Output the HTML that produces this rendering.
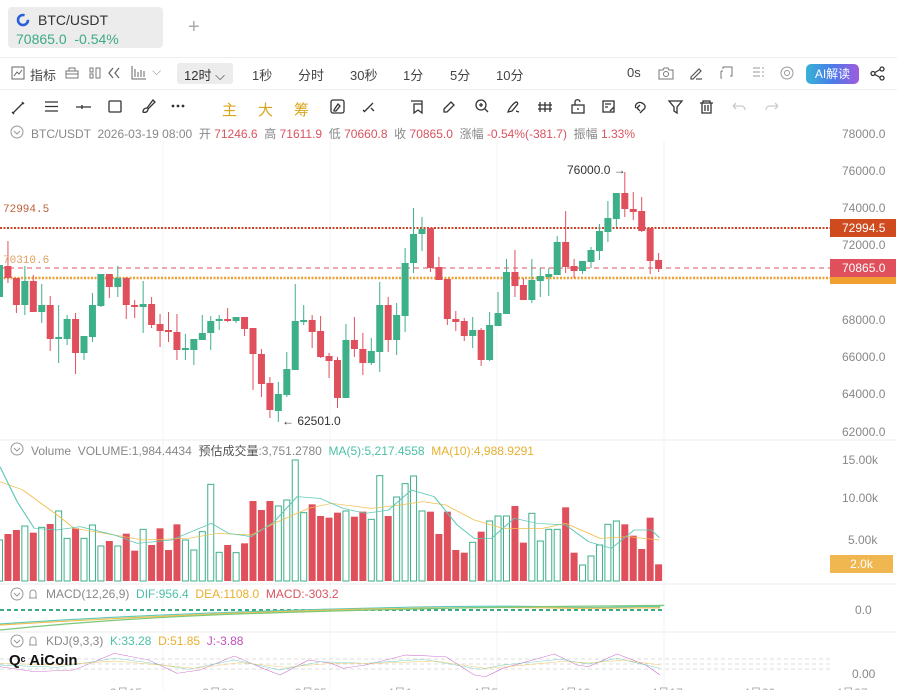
<!DOCTYPE html>
<html><head><meta charset="utf-8">
<style>
*{margin:0;padding:0;box-sizing:border-box}
html,body{width:897px;height:690px;overflow:hidden}
body{background:#fff;font-family:"Liberation Sans","Noto Sans CJK SC",sans-serif;position:relative;color:#333}
.a{position:absolute;white-space:nowrap}
.tab{left:8px;top:7px;width:155px;height:41px;background:#ececec;border-radius:4px}
.tb{font-size:13px;color:#444}
.ax{font-size:12px;color:#888;left:842px}
</style></head><body>
<div class="a tab"></div>
<svg class="a" style="left:16px;top:13px" width="14" height="14" viewBox="0 0 14 14"><circle cx="7" cy="7" r="5" fill="none" stroke="#2b5fd9" stroke-width="2.6" stroke-dasharray="25 6"/></svg>
<div class="a" style="left:38px;top:12px;font-size:14px;color:#333">BTC/USDT</div>
<div class="a" style="left:16px;top:31px;font-size:14px;color:#3dab83">70865.0 &nbsp;-0.54%</div>
<div class="a" style="left:188px;top:16px;font-size:20px;color:#aaa;font-weight:300">+</div>
<div class="a" style="left:0;top:57px;width:897px;height:1px;background:#eee"></div>
<div class="a" style="left:0;top:89px;width:897px;height:1px;background:#f0f0f0"></div>

<svg class="a" style="left:11px;top:66px" width="14" height="14"><rect x="1" y="1" width="12" height="12" fill="none" stroke="#666"/><path d="M3 10l3-4 2 2 3-4" fill="none" stroke="#666"/></svg>
<div class="a tb" style="left:30px;top:65px">指标</div>
<svg class="a" style="left:65px;top:67px" width="14" height="12"><path d="M1 4h12v7H1zM4 4V1h6v3M1 7h12" fill="none" stroke="#777"/></svg>
<svg class="a" style="left:89px;top:67px" width="12" height="12"><rect x="1" y="1" width="3" height="4" fill="none" stroke="#777"/><rect x="1" y="7" width="3" height="4" fill="none" stroke="#777"/><rect x="7" y="1" width="4" height="10" fill="none" stroke="#777"/></svg>
<svg class="a" style="left:107px;top:67px" width="14" height="12"><path d="M6 1L2 6l4 5M12 1L8 6l4 5" fill="none" stroke="#666" stroke-width="1.3"/></svg>
<svg class="a" style="left:131px;top:65px" width="16" height="15"><path d="M1 1v13h14M4 4v8M7 7v5M10 5v7M13 6v6" fill="none" stroke="#666"/></svg>
<div class="a" style="left:152px;top:64px;font-size:12px;color:#999">⌵</div>
<div class="a" style="left:177px;top:63px;width:56px;height:21px;background:#ececec;border-radius:3px"></div>
<div class="a tb" style="left:184px;top:65px;color:#333">12时 ⌵</div>
<div class="a tb" style="left:252px;top:65px">1秒</div>
<div class="a tb" style="left:298px;top:65px">分时</div>
<div class="a tb" style="left:350px;top:65px">30秒</div>
<div class="a tb" style="left:403px;top:65px">1分</div>
<div class="a tb" style="left:450px;top:65px">5分</div>
<div class="a tb" style="left:496px;top:65px">10分</div>
<div class="a tb" style="left:627px;top:65px">0s</div>
<svg class="a" style="left:658px;top:66px" width="16" height="14"><path d="M1 4h4l1-2h4l1 2h4v9H1z" fill="none" stroke="#777"/><circle cx="8" cy="8" r="2.5" fill="none" stroke="#777"/></svg>
<svg class="a" style="left:689px;top:66px" width="14" height="14"><path d="M2 11L10 3l2 2-8 8H2zM7 13h6" fill="none" stroke="#555" stroke-width="1.2"/></svg>
<svg class="a" style="left:720px;top:66px" width="13" height="13"><path d="M3 3V1h9v9h-2M1 5v7h1M1 5h2" fill="none" stroke="#777"/></svg>
<svg class="a" style="left:752px;top:67px" width="13" height="11"><path d="M1 1h11M1 5h11M1 9h11" stroke="#999" stroke-dasharray="7 2"/></svg>
<svg class="a" style="left:780px;top:66px" width="14" height="14"><circle cx="7" cy="7" r="6" fill="none" stroke="#999"/><circle cx="7" cy="7" r="2.5" fill="none" stroke="#999"/></svg>
<div class="a" style="left:806px;top:64px;width:53px;height:20px;border-radius:5px;background:linear-gradient(90deg,#36b3d6,#4a7be8,#a05ae0);color:#fff;font-size:12px;text-align:center;line-height:20px">AI解读</div>
<svg class="a" style="left:870px;top:66px" width="15" height="15"><circle cx="3" cy="7.5" r="2" fill="none" stroke="#333" stroke-width="1.3"/><circle cx="12" cy="3" r="2" fill="none" stroke="#333" stroke-width="1.3"/><circle cx="12" cy="12" r="2" fill="none" stroke="#333" stroke-width="1.3"/><path d="M5 6.5l5-3M5 8.5l5 3" stroke="#333" stroke-width="1.3"/></svg>

<svg class="a" style="left:0;top:96px" width="897" height="22" fill="none" stroke="#333" stroke-width="1.3">
<path d="M13 17l10-10M12 16l2 2M22 6l2 2"/>
<path d="M45 6h13M45 10.5h13M45 15h13"/>
<path d="M76 11h15M82 9v4"/>
<rect x="109" y="5" width="12" height="11" rx="1"/>
<path d="M143 16c0-3 2-4 4-4l6-8 2 2-7 7c0 3-3 4-5 3z"/>
<g fill="#333" stroke="none"><circle cx="173" cy="10" r="1.4"/><circle cx="178" cy="10" r="1.4"/><circle cx="183" cy="10" r="1.4"/></g>
<rect x="331" y="4" width="13" height="13" rx="2"/><path d="M334 14l4-6 2 2-4 5h-2z"/>
<path d="M364 16l9-9M363 14l2 2M371 12l3 3"/>
<path d="M411 5h11v11M414 8h8v9l-4-3-4 3z"/>
<path d="M444 13l7-7 3 3-7 7h-3z"/>
<circle cx="481" cy="9" r="5"/><path d="M485 13l3 3M481 7v4M479 9h4"/>
<path d="M508 16c1-4 6-9 8-10 2 0 2 2 1 3l-5 6zM516 15l3 1"/>
<path d="M540 6v10M545 6v10M550 6v10M538 9h14M538 13h14"/>
<rect x="572" y="9" width="12" height="8"/><path d="M575 9V6c0-3 5-3 5 0"/><path d="M578 12v2"/>
<rect x="603" y="5" width="11" height="11"/><path d="M605 8h6M605 11h3M610 15l4-4"/>
<path d="M636 12c-2-3 2-7 6-5s4 5 1 7l-3 3M640 9l-3 3 3 3"/>
<path d="M669 5h13l-5 6v6l-3-2v-4z"/>
<path d="M700 7h13M703 7V5h7v2M702 7v10h9V7M705 9v6M708 9v6"/>
<path d="M733 10h8c3 0 4 2 4 4M733 10l3-3M733 10l3 3" stroke="#ccc"/>
<path d="M778 10h-8c-3 0-4 2-4 4M778 10l-3-3M778 10l-3 3" stroke="#ccc"/>
</svg>
<div class="a" style="left:222px;top:99px;font-size:15px;color:#d8a418">主</div>
<div class="a" style="left:258px;top:99px;font-size:15px;color:#d8a418">大</div>
<div class="a" style="left:294px;top:99px;font-size:15px;color:#d8a418">筹</div>

<svg class="a" style="left:10px;top:125px" width="14" height="14"><circle cx="7" cy="7" r="6" fill="none" stroke="#999"/><path d="M4 6l3 3 3-3" fill="none" stroke="#999"/></svg>
<div class="a" style="left:31px;top:125px;font-size:12px;color:#888">BTC/USDT &nbsp;2026-03-19 08:00 &nbsp;开 <span style="color:#d9535f">71246.6</span> &nbsp;高 <span style="color:#d9535f">71611.9</span> &nbsp;低 <span style="color:#d9535f">70660.8</span> &nbsp;收 <span style="color:#d9535f">70865.0</span> &nbsp;涨幅 <span style="color:#d9535f">-0.54%(-381.7)</span> &nbsp;振幅 <span style="color:#d9535f">1.33%</span></div>

<div class="a ax" style="top:127px">78000.0</div>
<div class="a ax" style="top:164px">76000.0</div>
<div class="a ax" style="top:201px">74000.0</div>
<div class="a ax" style="top:238px">72000.0</div>
<div class="a ax" style="top:313px">68000.0</div>
<div class="a ax" style="top:350px">66000.0</div>
<div class="a ax" style="top:387px">64000.0</div>
<div class="a ax" style="top:425px">62000.0</div>
<div class="a ax" style="top:453px">15.00k</div>
<div class="a ax" style="top:491px">10.00k</div>
<div class="a ax" style="top:533px;left:848px">5.00k</div>
<div class="a ax" style="top:603px;left:855px">0.0</div>
<div class="a ax" style="top:667px;left:852px">0.00</div>

<svg class="a" style="left:0;top:0" width="897" height="690">
<g stroke="#f3f3f3"><path d="M163 140V690M330 140V690M497 140V690M664 140V690"/></g>
<g stroke="#eee"><path d="M0 440H897M0 584H897M0 632H897"/></g>
<path d="M0 228H830" stroke="#c9442a" stroke-width="2" stroke-dasharray="2 1.5"/>
<path d="M0 268H830" stroke="#d9535f" stroke-width="1" stroke-dasharray="5 4"/>
<path d="M0 278H830" stroke="#eda030" stroke-width="2.5" stroke-dasharray="2 1.5"/>
<g id="candles"></g>
<g id="vol"></g>
<g transform="translate(0,435) scale(0.5714,0.3333)" fill="none" stroke-width="2.2">
<polyline stroke="#f0c050" points="0,140 40,165 100,240 130,280 200,300 250,315 330,310 380,295 440,300 480,265 540,220 580,205 650,220 700,210 740,200 780,210 830,255 880,280 950,280 990,265 1050,310 1100,305 1154,315"/>
<polyline stroke="#5fc8b8" points="0,95 30,200 60,280 100,285 140,275 200,300 240,325 300,315 370,265 400,295 440,305 480,260 520,185 560,190 600,220 640,235 680,225 720,165 760,185 800,270 830,310 860,310 900,250 940,265 990,270 1030,320 1070,340 1110,285 1140,285 1154,308"/>
</g>
<path d="M0 610H662" stroke="#3aa884" stroke-width="2" stroke-dasharray="4 3"/>
<path d="M0 624C100 617 200 613 300 610S500 605 560 607 640 605 660 607" stroke="#5fc8b8" fill="none" stroke-width="1.2"/>
<path d="M0 625C100 619 200 614 300 611S500 607 560 608 640 607 660 608" stroke="#f0c050" fill="none" stroke-width="1.2"/>
<path d="M0 630C80 622 160 616 300 612S500 607 600 606 650 605 660 607" stroke="#7cc87c" fill="none" stroke-width="1.2"/>
<g stroke="#ddd" stroke-dasharray="4 3"><path d="M0 659H830M0 664H830M0 669H830"/></g>
<g fill="none" stroke-width="1.2" transform="translate(0,580) scale(0.5714,0.3333)">
<polyline stroke="#c050c0" points="0,260 60,275 130,270 200,220 260,240 310,280 350,270 410,228 460,265 490,285 540,240 580,250 600,265 640,255 710,225 780,230 830,285 850,290 880,265 970,222 1010,255 1030,260 1080,222 1130,255 1155,285"/>
<polyline stroke="#5fc8b8" points="0,255 100,262 200,235 260,248 330,268 410,240 490,270 560,245 640,250 740,238 840,268 880,255 980,238 1030,252 1080,235 1155,265"/>
<polyline stroke="#f0c050" points="0,250 100,255 200,243 280,255 340,265 420,248 500,262 580,250 660,250 760,243 850,265 900,258 980,245 1040,248 1090,240 1155,255"/>
</g>
</svg>

<div class="a" style="left:3px;top:204px;font-family:'Liberation Mono',monospace;font-size:11px;color:#c0603a">72994.5</div>
<div class="a" style="left:3px;top:255px;font-family:'Liberation Mono',monospace;font-size:11px;color:#e0a060">70310.6</div>
<div class="a" style="left:567px;top:163px;font-size:12px;color:#333">76000.0 →</div>
<div class="a" style="left:282px;top:414px;font-size:12px;color:#333">← 62501.0</div>
<div class="a" style="left:830px;top:271px;width:66px;height:13px;background:#f0a030"></div>
<div class="a" style="left:830px;top:219px;width:66px;height:18px;background:#cf4a1e;color:#fff;font-size:12px;line-height:18px;padding-left:12px">72994.5</div>
<div class="a" style="left:830px;top:259px;width:66px;height:18px;background:#df4f5c;color:#fff;font-size:12px;line-height:18px;padding-left:12px">70865.0</div>
<div class="a" style="left:830px;top:555px;width:63px;height:18px;background:#f0b650;color:#fff;font-size:12px;line-height:18px;text-align:center">2.0k</div>

<svg class="a" style="left:10px;top:442px" width="14" height="14"><circle cx="7" cy="7" r="6" fill="none" stroke="#999"/><path d="M4 6l3 3 3-3" fill="none" stroke="#999"/></svg>
<div class="a" style="left:31px;top:442px;font-size:12px;color:#888">Volume &nbsp;VOLUME:1,984.4434 &nbsp;<span style="color:#555">预估成交量</span>:3,751.2780 &nbsp;<span style="color:#4cc0a8">MA(5):5,217.4558</span> &nbsp;<span style="color:#e8b030">MA(10):4,988.9291</span></div>
<svg class="a" style="left:10px;top:587px" width="30" height="14"><circle cx="7" cy="7" r="6" fill="none" stroke="#999"/><path d="M4 6l3 3 3-3" fill="none" stroke="#999"/><path d="M20 11V6a3 3 0 016 0v5zM19 11h8" fill="none" stroke="#999"/></svg>
<div class="a" style="left:46px;top:587px;font-size:12px;color:#888">MACD(12,26,9) &nbsp;<span style="color:#4cc0a8">DIF:956.4</span> &nbsp;<span style="color:#e8b030">DEA:1108.0</span> &nbsp;<span style="color:#d9535f">MACD:-303.2</span></div>
<svg class="a" style="left:10px;top:634px" width="30" height="14"><circle cx="7" cy="7" r="6" fill="none" stroke="#999"/><path d="M4 6l3 3 3-3" fill="none" stroke="#999"/><path d="M20 11V6a3 3 0 016 0v5zM19 11h8" fill="none" stroke="#999"/></svg>
<div class="a" style="left:46px;top:634px;font-size:12px;color:#888">KDJ(9,3,3) &nbsp;<span style="color:#4cc0a8">K:33.28</span> &nbsp;<span style="color:#e8b030">D:51.85</span> &nbsp;<span style="color:#c050c0">J:-3.88</span></div>
<div class="a" style="left:9px;top:652px;font-size:15px;font-weight:bold;color:#111">Q<span style="font-size:13px">ᶜ</span> AiCoin</div>
<div class="a" style="left:0;top:684px;width:897px;height:6px;overflow:hidden"><div class="a" style="left:110px;top:0;font-size:12px;color:#aaa;word-spacing:57px">3月15 3月20 3月25 4月1 4月5 4月10 4月17 4月20 4月27</div></div>

<script>
var C=[[1,265,297,265,297],[0,266,278,241,283],[0,278,305,278,313],[1,281,305,266,315],[0,281,312,275,312],[1,305,312,284,323],[0,305,339,296,351],[1,337,339,305,363],[1,319,339,315,345],[0,319,353,313,374],[1,336,353,336,360],[1,305,337,293,342],[1,274,306,274,307],[0,274,287,274,298],[1,278,287,266,297],[0,278,305,277,319],[0,305,307,300,318],[1,304,307,281,333],[0,304,325,297,328],[0,324,331,314,347],[0,330,332,312,342],[0,332,350,314,360],[1,348,350,334,360],[1,339,350,339,365],[1,333,340,315,340],[1,321,333,316,350],[1,319,321,315,330],[0,319,321,308,322],[1,317,321,317,323],[0,317,329,317,336],[0,328,354,328,390],[0,354,384,349,397],[0,383,410,377,418],[1,394,411,382,422],[1,369,395,352,397],[1,321,370,284,370],[1,320,322,305,325],[0,320,332,315,348],[0,331,357,316,358],[0,356,361,353,378],[0,360,398,357,408],[1,340,398,324,398],[0,340,349,317,357],[0,349,363,333,375],[1,351,363,338,365],[1,305,352,282,372],[0,305,340,297,352],[1,315,340,303,355],[1,263,316,248,332],[1,234,263,208,273],[1,229,234,217,251],[0,228,268,228,272],[0,267,280,257,280],[0,279,319,279,325],[0,319,322,311,331],[0,321,336,318,341],[1,330,336,317,348],[0,330,360,328,366],[1,325,360,312,361],[1,313,326,292,326],[1,272,314,259,314],[0,272,286,250,297],[0,285,300,278,300],[1,280,300,259,303],[1,276,281,268,297],[1,274,277,268,296],[1,242,275,236,275],[0,242,267,211,273],[0,266,271,259,278],[1,261,271,261,274],[1,250,262,247,268],[1,231,251,224,260],[1,218,232,201,242],[1,193,219,193,227],[0,193,209,172,217],[0,209,212,192,220],[0,211,231,197,232],[0,228,261,228,274],[0,260,269,253,272]];
var V=[[1,315],[0,297],[0,285],[1,273],[0,293],[1,277],[0,267],[1,228],[1,310],[0,280],[1,310],[1,270],[1,333],[0,318],[1,333],[0,296],[0,347],[1,283],[0,330],[0,280],[0,345],[0,268],[1,315],[1,345],[1,290],[1,148],[1,352],[0,330],[1,353],[0,325],[0,198],[0,225],[0,198],[1,213],[1,195],[1,75],[1,233],[0,208],[0,243],[0,248],[0,233],[1,228],[0,245],[0,230],[1,253],[1,122],[0,243],[1,186],[1,146],[1,123],[1,228],[0,230],[0,297],[0,230],[0,345],[0,353],[1,322],[0,290],[1,258],[1,243],[1,243],[0,213],[0,323],[1,235],[1,318],[1,283],[1,283],[0,217],[0,353],[1,390],[1,363],[1,330],[1,268],[1,258],[0,268],[0,302],[0,342],[0,248],[0,388]];
var s='',g='#3db08a',r='#e0505c';
C.forEach(function(c,i){var x=8.45*i-0.5,col=c[0]?g:r,h=Math.max(1.5,c[2]-c[1]);
s+='<line x1="'+x+'" x2="'+x+'" y1="'+c[3]+'" y2="'+c[4]+'" stroke="'+col+'"/>';
s+='<rect x="'+(x-3.5)+'" y="'+c[1]+'" width="7" height="'+h+'" fill="'+col+'"/>';});
document.getElementById('candles').innerHTML=s;
s='';
V.forEach(function(v,i){var x=8.45*i-0.5,y=435+v[1]/3,h=581-y;
if(v[0])s+='<rect x="'+(x-3)+'" y="'+y+'" width="6" height="'+h+'" fill="none" stroke="'+g+'" stroke-width="1"/>';
else s+='<rect x="'+(x-3.5)+'" y="'+y+'" width="7" height="'+h+'" fill="'+r+'"/>';});
document.getElementById('vol').innerHTML=s;
</script>
</body></html>
